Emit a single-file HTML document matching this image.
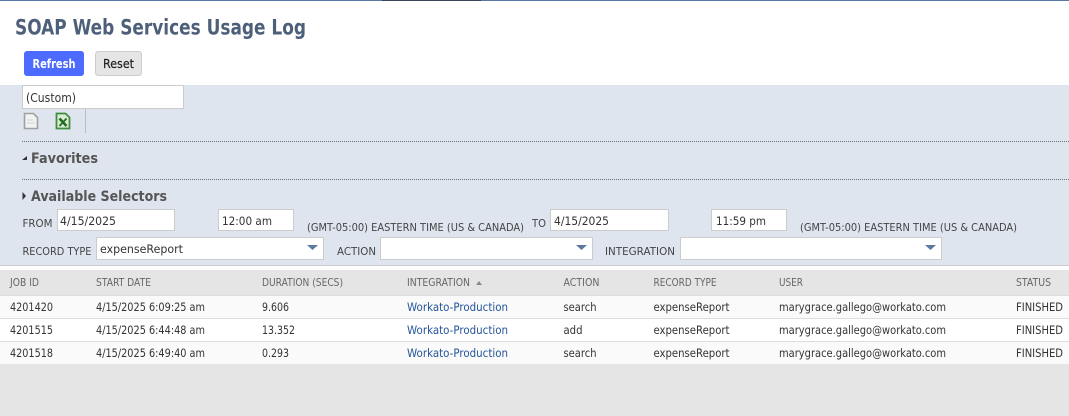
<!DOCTYPE html>
<html><head><meta charset="utf-8"><style>
html,body{margin:0;padding:0;background:#fff;width:1069px;height:416px;overflow:hidden}
svg{display:block}
text{font-family:"DejaVu Sans",sans-serif;font-size:11px;fill:#444}
.h{fill:#666;font-size:10.5px}
.l{fill:#444;font-size:10.5px}
.v{fill:#333;font-size:11.5px}
.k{fill:#255599}
</style></head><body>
<svg width="1069" height="416" viewBox="0 0 1069 416" xmlns="http://www.w3.org/2000/svg">
<rect width="1069" height="416" fill="#fff"/>
<rect width="1069" height="1" fill="#5a78a3"/>
<rect x="382" width="99" height="1" fill="#3a4658"/>
<text x="15" y="34.500" textLength="291" lengthAdjust="spacingAndGlyphs" style="font-size:21px;font-weight:bold;fill:#4d5f79">SOAP Web Services Usage Log</text>
<rect x="24" y="51" width="60" height="25" rx="3" fill="#4d6bfe"/>
<text x="32.500" y="68" textLength="43" lengthAdjust="spacingAndGlyphs" style="font-size:12.500px;font-weight:bold;fill:#fff">Refresh</text>
<rect x="95.500" y="51.500" width="46" height="24" rx="3" fill="#e5e5e5" stroke="#ccc"/>
<text x="103" y="68" textLength="31" lengthAdjust="spacingAndGlyphs" style="font-size:12.500px;fill:#222;stroke:#222;stroke-width:.2">Reset</text>
<rect y="85" width="1069" height="180" fill="#dfe5ef"/>
<rect y="265" width="1069" height="1" fill="#ccc"/>
<rect x="22.500" y="85.500" width="161" height="23" fill="#fff" stroke="#ccc"/>
<text x="26" y="102" textLength="50" lengthAdjust="spacingAndGlyphs" style="font-size:12px;fill:#333">(Custom)</text>
<path d="M24.500 113.500h9l4 4v11h-13z" fill="#f2f2f2" stroke="#a0a0a0" stroke-width="1.600"/>
<path d="M27 120h6M27 123h8" stroke="#ddd" stroke-width="1.500"/>
<path d="M56.500 113.500h9l4 4v11h-13z" fill="#dcebd6" stroke="#3f8d3f" stroke-width="1.800"/>
<path d="M59.500 118.500l7 7.500" stroke="#1f6e1f" stroke-width="2.600"/>
<path d="M66.500 118.500l-7 7.500" stroke="#1f6e1f" stroke-width="1.800"/>
<rect x="85" y="109" width="1" height="24" fill="#b8bdc5"/>
<line x1="22" y1="141.500" x2="1069" y2="141.500" stroke="#6b6f78" stroke-dasharray="1 1"/>
<path d="M22 160l5-4v4z" fill="#333"/>
<text x="31" y="163" textLength="67" lengthAdjust="spacingAndGlyphs" style="font-size:14.500px;font-weight:bold;fill:#555">Favorites</text>
<line x1="22" y1="179.500" x2="1069" y2="179.500" stroke="#6b6f78" stroke-dasharray="1 1"/>
<path d="M22.500 192l3.500 4-3.500 4z" fill="#333"/>
<text x="31" y="201" textLength="136" lengthAdjust="spacingAndGlyphs" style="font-size:14.500px;font-weight:bold;fill:#555">Available Selectors</text>
<text class="l" x="22.500" y="227" textLength="30" lengthAdjust="spacingAndGlyphs">FROM</text>
<rect x="57.500" y="209.500" width="117" height="21" fill="#fff" stroke="#ccc"/>
<text class="v" x="60" y="225" textLength="56" lengthAdjust="spacingAndGlyphs">4/15/2025</text>
<rect x="218.500" y="209.500" width="75" height="21" fill="#fff" stroke="#ccc"/>
<text class="v" x="222" y="225" textLength="50" lengthAdjust="spacingAndGlyphs">12:00 am</text>
<text class="l" x="307" y="231" textLength="217" lengthAdjust="spacingAndGlyphs">(GMT-05:00) EASTERN TIME (US &amp; CANADA)</text>
<text class="l" x="532" y="227" textLength="14" lengthAdjust="spacingAndGlyphs">TO</text>
<rect x="550.500" y="209.500" width="118" height="21" fill="#fff" stroke="#ccc"/>
<text class="v" x="554" y="225" textLength="55" lengthAdjust="spacingAndGlyphs">4/15/2025</text>
<rect x="711.500" y="209.500" width="75" height="21" fill="#fff" stroke="#ccc"/>
<text class="v" x="716" y="225" textLength="50" lengthAdjust="spacingAndGlyphs">11:59 pm</text>
<text class="l" x="800" y="231" textLength="217" lengthAdjust="spacingAndGlyphs">(GMT-05:00) EASTERN TIME (US &amp; CANADA)</text>
<text class="l" x="22.500" y="255" textLength="69" lengthAdjust="spacingAndGlyphs">RECORD TYPE</text>
<rect x="96.500" y="237.500" width="227" height="22" fill="#fff" stroke="#ccc"/>
<text class="v" x="100" y="253" textLength="83" lengthAdjust="spacingAndGlyphs">expenseReport</text>
<path d="M307 245h11l-5.500 5z" fill="#5d7a9e"/>
<text class="l" x="337" y="255" textLength="39" lengthAdjust="spacingAndGlyphs">ACTION</text>
<rect x="380.500" y="237.500" width="212" height="22" fill="#fff" stroke="#ccc"/>
<path d="M576 245h11l-5.500 5z" fill="#5d7a9e"/>
<text class="l" x="605" y="255" textLength="70" lengthAdjust="spacingAndGlyphs">INTEGRATION</text>
<rect x="680.500" y="237.500" width="261" height="22" fill="#fff" stroke="#ccc"/>
<path d="M925 245h11l-5.500 5z" fill="#5d7a9e"/>
<rect y="270" width="1069" height="146" fill="#e5e5e5"/>
<rect y="296" width="1069" height="22" fill="#fafafa"/>
<rect y="318" width="1069" height="1" fill="#ddd"/>
<rect y="319" width="1069" height="22" fill="#fff"/>
<rect y="341" width="1069" height="1" fill="#ddd"/>
<rect y="342" width="1069" height="22" fill="#fafafa"/>
<rect y="295" width="1069" height="1" fill="#ddd"/>
<text class="h" x="10" y="286" textLength="29" lengthAdjust="spacingAndGlyphs">JOB ID</text>
<text class="h" x="96" y="286" textLength="55" lengthAdjust="spacingAndGlyphs">START DATE</text>
<text class="h" x="262" y="286" textLength="81" lengthAdjust="spacingAndGlyphs">DURATION (SECS)</text>
<text class="h" x="407" y="286" textLength="63" lengthAdjust="spacingAndGlyphs">INTEGRATION</text>
<path d="M476 285l3-4 3 4z" fill="#888"/>
<text class="h" x="563.500" y="286" textLength="36" lengthAdjust="spacingAndGlyphs">ACTION</text>
<text class="h" x="653.500" y="286" textLength="63" lengthAdjust="spacingAndGlyphs">RECORD TYPE</text>
<text class="h" x="779" y="286" textLength="24" lengthAdjust="spacingAndGlyphs">USER</text>
<text class="h" x="1016" y="286" textLength="35" lengthAdjust="spacingAndGlyphs">STATUS</text>
<text class="v" x="10" y="311" textLength="43" lengthAdjust="spacingAndGlyphs">4201420</text>
<text class="v" x="96" y="311" textLength="109" lengthAdjust="spacingAndGlyphs">4/15/2025 6:09:25 am</text>
<text class="v" x="262" y="311" textLength="27" lengthAdjust="spacingAndGlyphs">9.606</text>
<text class="v k" x="407" y="311" textLength="101" lengthAdjust="spacingAndGlyphs">Workato-Production</text>
<text class="v" x="563.500" y="311" textLength="33" lengthAdjust="spacingAndGlyphs">search</text>
<text class="v" x="653.500" y="311" textLength="76" lengthAdjust="spacingAndGlyphs">expenseReport</text>
<text class="v" x="779" y="311" textLength="167" lengthAdjust="spacingAndGlyphs">marygrace.gallego@workato.com</text>
<text class="v" x="1016" y="311" textLength="47" lengthAdjust="spacingAndGlyphs">FINISHED</text>
<text class="v" x="10" y="334" textLength="43" lengthAdjust="spacingAndGlyphs">4201515</text>
<text class="v" x="96" y="334" textLength="109" lengthAdjust="spacingAndGlyphs">4/15/2025 6:44:48 am</text>
<text class="v" x="262" y="334" textLength="33" lengthAdjust="spacingAndGlyphs">13.352</text>
<text class="v k" x="407" y="334" textLength="101" lengthAdjust="spacingAndGlyphs">Workato-Production</text>
<text class="v" x="563.500" y="334" textLength="19" lengthAdjust="spacingAndGlyphs">add</text>
<text class="v" x="653.500" y="334" textLength="76" lengthAdjust="spacingAndGlyphs">expenseReport</text>
<text class="v" x="779" y="334" textLength="167" lengthAdjust="spacingAndGlyphs">marygrace.gallego@workato.com</text>
<text class="v" x="1016" y="334" textLength="47" lengthAdjust="spacingAndGlyphs">FINISHED</text>
<text class="v" x="10" y="357" textLength="43" lengthAdjust="spacingAndGlyphs">4201518</text>
<text class="v" x="96" y="357" textLength="109" lengthAdjust="spacingAndGlyphs">4/15/2025 6:49:40 am</text>
<text class="v" x="262" y="357" textLength="27" lengthAdjust="spacingAndGlyphs">0.293</text>
<text class="v k" x="407" y="357" textLength="101" lengthAdjust="spacingAndGlyphs">Workato-Production</text>
<text class="v" x="563.500" y="357" textLength="33" lengthAdjust="spacingAndGlyphs">search</text>
<text class="v" x="653.500" y="357" textLength="76" lengthAdjust="spacingAndGlyphs">expenseReport</text>
<text class="v" x="779" y="357" textLength="167" lengthAdjust="spacingAndGlyphs">marygrace.gallego@workato.com</text>
<text class="v" x="1016" y="357" textLength="47" lengthAdjust="spacingAndGlyphs">FINISHED</text>
</svg>
</body></html>
